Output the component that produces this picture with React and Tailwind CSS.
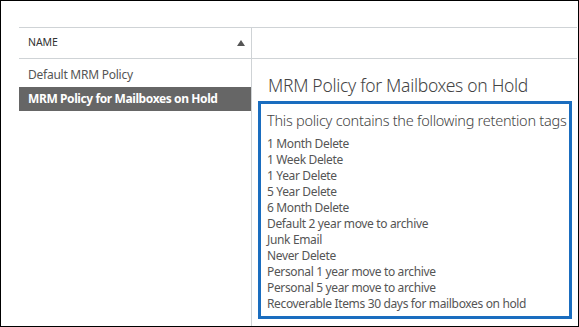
import React from 'react'

const TAGS = [
  '1 Month Delete',
  '1 Week Delete',
  '1 Year Delete',
  '5 Year Delete',
  '6 Month Delete',
  'Default 2 year move to archive',
  'Junk Email',
  'Never Delete',
  'Personal 1 year move to archive',
  'Personal 5 year move to archive',
  'Recoverable Items 30 days for mailboxes on hold',
]

const font = { fontFamily: '"Segoe UI", "Noto Sans", "Open Sans", sans-serif' }

function App() {
  return (
    <div
      className="w-[579px] h-[327px] border border-black bg-white pl-[18px] pr-px pt-[26px] flex flex-col overflow-hidden"
      style={font}
    >
      {/* header */}
      <div className="flex h-[32px] border-t border-b border-[#cfd3d6]">
        <div className="w-[233px] border-r border-[#cfd3d6] flex items-center justify-between pl-[9px] pr-[6px]">
          <span className="text-[10.5px] text-[#333] tracking-[-0.1px]">NAME</span>
          <span className="w-0 h-0 border-l-[4px] border-r-[4px] border-b-[6px] border-l-transparent border-r-transparent border-b-[#555]" />
        </div>
        <div className="flex-1" />
      </div>

      {/* body */}
      <div className="flex flex-1">
        <div className="w-[233px] pt-[4px] border-r border-[#cfd3d6]">
          <div className="h-[24px] flex items-center pl-[9px] text-[12px] tracking-[-0.25px] text-[#555]">
            Default MRM Policy
          </div>
          <div className="h-[24px] flex items-center pl-[9px] text-[12px] tracking-[-0.4px] font-bold text-white bg-[#666]">
            MRM Policy for Mailboxes on Hold
          </div>
        </div>
        <div className="flex-1 pl-[6px] pr-[5px] flex flex-col">
          <div className="h-[42px] flex items-end pb-[7px] pl-[10px] text-[17.5px] tracking-[-0.3px] font-light text-[#444] leading-none">
            MRM Policy for Mailboxes on Hold
          </div>
          <div className="border-[3px] border-[#1a6dbf] pl-[6px] pt-[6px] pb-[4px]">
            <div className="text-[14.5px] tracking-[-0.26px] font-light text-[#444] leading-[20px] mb-[6px] whitespace-nowrap">
              This policy contains the following retention tags
            </div>
            {TAGS.map(t => (
              <div key={t} className="text-[12px] tracking-[-0.35px] text-[#555] leading-[16px] whitespace-nowrap">
                {t}
              </div>
            ))}
          </div>
        </div>
      </div>
    </div>
  )
}

export default App
